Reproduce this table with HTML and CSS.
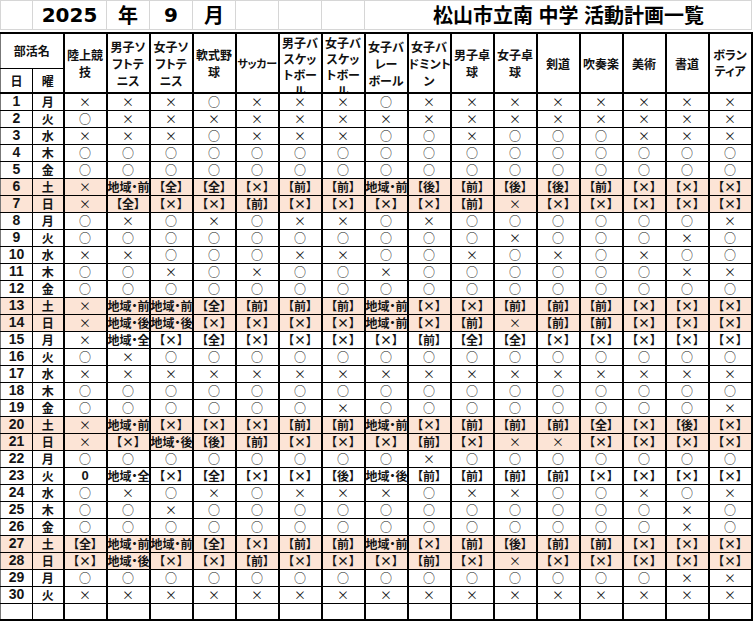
FILE: index.html
```html
<!DOCTYPE html>
<html lang="ja">
<head>
<meta charset="utf-8">
<title>松山市立南 中学 活動計画一覧</title>
<link rel="stylesheet" href="styles.css">
</head>
<body>
<div class="sheet">
<table class="grid title">
<colgroup><col class="col-day"><col class="col-wd"><col class="col-club" span="16"></colgroup>
<tr>
<td></td><td colspan="2" class="num">2025</td><td>年</td><td class="num">9</td><td>月</td><td></td><td></td><td></td><td colspan="9" class="name">松山市立南 中学 活動計画一覧</td>
</tr>
</table>
<table class="grid plan">
<colgroup><col class="col-day"><col class="col-wd"><col class="col-club" span="16"></colgroup>
<thead>
<tr class="h1">
<th colspan="2" class="bk">部活名</th>
<th rowspan="2" class="club"><div class="hd">陸上競<br>技</div></th>
<th rowspan="2" class="club"><div class="hd">男子ソ<br>フトテ<br>ニス</div></th>
<th rowspan="2" class="club"><div class="hd">女子ソ<br>フトテ<br>ニス</div></th>
<th rowspan="2" class="club"><div class="hd">軟式野<br>球</div></th>
<th rowspan="2" class="club"><div class="hd sm">サッカー</div></th>
<th rowspan="2" class="club"><div class="hd tall">男子バ<br>スケッ<br>トボー<br>ル</div></th>
<th rowspan="2" class="club"><div class="hd tall">女子バ<br>スケッ<br>トボー<br>ル</div></th>
<th rowspan="2" class="club"><div class="hd">女子バ<br>レー<br>ボール</div></th>
<th rowspan="2" class="club"><div class="hd">女子バ<br>ドミント<br>ン</div></th>
<th rowspan="2" class="club"><div class="hd">男子卓<br>球</div></th>
<th rowspan="2" class="club"><div class="hd">女子卓<br>球</div></th>
<th rowspan="2" class="club"><div class="hd">剣道</div></th>
<th rowspan="2" class="club"><div class="hd">吹奏楽</div></th>
<th rowspan="2" class="club"><div class="hd">美術</div></th>
<th rowspan="2" class="club"><div class="hd">書道</div></th>
<th rowspan="2" class="club"><div class="hd tight">ボラン<br>ティア</div></th>
</tr>
<tr class="h2"><th>日</th><th>曜</th></tr>
</thead>
<tbody>
<tr><td class="d">1</td><td class="w">月</td><td>×</td><td>×</td><td>×</td><td>○</td><td>×</td><td>×</td><td>×</td><td>○</td><td>×</td><td>×</td><td>×</td><td>×</td><td>×</td><td>×</td><td>×</td><td>×</td></tr>
<tr><td class="d">2</td><td class="w">火</td><td>○</td><td>×</td><td>×</td><td>×</td><td>×</td><td>×</td><td>×</td><td>×</td><td>×</td><td>×</td><td>×</td><td>×</td><td>×</td><td>×</td><td>×</td><td>×</td></tr>
<tr><td class="d">3</td><td class="w">水</td><td>×</td><td>×</td><td>×</td><td>○</td><td>×</td><td>×</td><td>×</td><td>○</td><td>○</td><td>×</td><td>○</td><td>○</td><td>○</td><td>×</td><td>×</td><td>×</td></tr>
<tr><td class="d">4</td><td class="w">木</td><td>○</td><td>○</td><td>○</td><td>○</td><td>○</td><td>○</td><td>○</td><td>○</td><td>○</td><td>○</td><td>○</td><td>○</td><td>○</td><td>○</td><td>○</td><td>○</td></tr>
<tr><td class="d">5</td><td class="w">金</td><td>○</td><td>○</td><td>○</td><td>○</td><td>○</td><td>○</td><td>○</td><td>○</td><td>○</td><td>○</td><td>○</td><td>○</td><td>○</td><td>○</td><td>○</td><td>○</td></tr>
<tr class="we"><td class="d">6</td><td class="w">土</td><td>×</td><td class="t">地域・前</td><td class="t">【全】</td><td class="t">【全】</td><td class="t">【×】</td><td class="t">【前】</td><td class="t">【前】</td><td class="t">地域・前</td><td class="t">【後】</td><td class="t">【前】</td><td class="t">【後】</td><td class="t">【後】</td><td class="t">【前】</td><td class="t">【×】</td><td class="t">【×】</td><td class="t">【×】</td></tr>
<tr class="we"><td class="d">7</td><td class="w">日</td><td>×</td><td class="t">【全】</td><td class="t">【×】</td><td class="t">【×】</td><td class="t">【前】</td><td class="t">【×】</td><td class="t">【×】</td><td class="t">【×】</td><td class="t">【×】</td><td class="t">【前】</td><td>×</td><td class="t">【×】</td><td class="t">【×】</td><td class="t">【×】</td><td class="t">【×】</td><td class="t">【×】</td></tr>
<tr><td class="d">8</td><td class="w">月</td><td>○</td><td>×</td><td>○</td><td>×</td><td>○</td><td>×</td><td>×</td><td>○</td><td>×</td><td>○</td><td>○</td><td>○</td><td>○</td><td>○</td><td>○</td><td>×</td></tr>
<tr><td class="d">9</td><td class="w">火</td><td>○</td><td>○</td><td>○</td><td>○</td><td>○</td><td>○</td><td>○</td><td>○</td><td>○</td><td>○</td><td>×</td><td>○</td><td>○</td><td>○</td><td>×</td><td>○</td></tr>
<tr><td class="d">10</td><td class="w">水</td><td>×</td><td>×</td><td>○</td><td>○</td><td>○</td><td>×</td><td>×</td><td>○</td><td>○</td><td>×</td><td>○</td><td>×</td><td>○</td><td>×</td><td>○</td><td>○</td></tr>
<tr><td class="d">11</td><td class="w">木</td><td>○</td><td>○</td><td>×</td><td>○</td><td>×</td><td>○</td><td>○</td><td>×</td><td>○</td><td>○</td><td>○</td><td>○</td><td>○</td><td>○</td><td>×</td><td>×</td></tr>
<tr><td class="d">12</td><td class="w">金</td><td>○</td><td>○</td><td>○</td><td>○</td><td>○</td><td>○</td><td>○</td><td>○</td><td>○</td><td>○</td><td>○</td><td>○</td><td>○</td><td>○</td><td>○</td><td>○</td></tr>
<tr class="we"><td class="d">13</td><td class="w">土</td><td>×</td><td class="t">地域・前</td><td class="t">地域・前</td><td class="t">【全】</td><td class="t">【前】</td><td class="t">【前】</td><td class="t">【前】</td><td class="t">地域・前</td><td class="t">【×】</td><td class="t">【×】</td><td class="t">【前】</td><td class="t">【前】</td><td class="t">【前】</td><td class="t">【×】</td><td class="t">【×】</td><td class="t">【×】</td></tr>
<tr class="we"><td class="d">14</td><td class="w">日</td><td>×</td><td class="t">地域・後</td><td class="t">地域・後</td><td class="t">【×】</td><td class="t">【×】</td><td class="t">【×】</td><td class="t">【×】</td><td class="t">地域・前</td><td class="t">【×】</td><td class="t">【前】</td><td>×</td><td class="t">【前】</td><td class="t">【前】</td><td class="t">【×】</td><td class="t">【×】</td><td class="t">【×】</td></tr>
<tr><td class="d">15</td><td class="w">月</td><td>×</td><td class="t">地域・全</td><td class="t">【×】</td><td class="t">【全】</td><td class="t">【×】</td><td class="t">【×】</td><td class="t">【×】</td><td class="t">【×】</td><td class="t">【前】</td><td class="t">【全】</td><td class="t">【全】</td><td class="t">【×】</td><td class="t">【×】</td><td class="t">【×】</td><td class="t">【×】</td><td class="t">【×】</td></tr>
<tr><td class="d">16</td><td class="w">火</td><td>○</td><td>×</td><td>○</td><td>○</td><td>○</td><td>○</td><td>○</td><td>○</td><td>○</td><td>○</td><td>○</td><td>○</td><td>○</td><td>○</td><td>○</td><td>○</td></tr>
<tr><td class="d">17</td><td class="w">水</td><td>×</td><td>×</td><td>×</td><td>×</td><td>×</td><td>×</td><td>×</td><td>×</td><td>×</td><td>×</td><td>×</td><td>×</td><td>×</td><td>×</td><td>×</td><td>×</td></tr>
<tr><td class="d">18</td><td class="w">木</td><td>○</td><td>○</td><td>○</td><td>○</td><td>○</td><td>○</td><td>○</td><td>○</td><td>○</td><td>○</td><td>○</td><td>○</td><td>○</td><td>○</td><td>○</td><td>○</td></tr>
<tr><td class="d">19</td><td class="w">金</td><td>○</td><td>○</td><td>○</td><td>○</td><td>○</td><td>○</td><td>×</td><td>○</td><td>○</td><td>○</td><td>○</td><td>○</td><td>○</td><td>○</td><td>○</td><td>×</td></tr>
<tr class="we"><td class="d">20</td><td class="w">土</td><td>×</td><td class="t">地域・前</td><td class="t">【×】</td><td class="t">【×】</td><td class="t">【×】</td><td class="t">【前】</td><td class="t">【前】</td><td class="t">地域・前</td><td class="t">【×】</td><td class="t">【前】</td><td class="t">【前】</td><td class="t">【前】</td><td class="t">【全】</td><td class="t">【×】</td><td class="t">【後】</td><td class="t">【×】</td></tr>
<tr class="we"><td class="d">21</td><td class="w">日</td><td>×</td><td class="t">【×】</td><td class="t">地域・後</td><td class="t">【後】</td><td class="t">【前】</td><td class="t">【×】</td><td class="t">【×】</td><td class="t">【×】</td><td class="t">【前】</td><td class="t">【×】</td><td>×</td><td>×</td><td class="t">【×】</td><td class="t">【×】</td><td class="t">【×】</td><td class="t">【×】</td></tr>
<tr><td class="d">22</td><td class="w">月</td><td>○</td><td>○</td><td>○</td><td>○</td><td>○</td><td>○</td><td>○</td><td>○</td><td>×</td><td>○</td><td>○</td><td>○</td><td>○</td><td>○</td><td>○</td><td>○</td></tr>
<tr><td class="d">23</td><td class="w">火</td><td class="t zero">0</td><td class="t">地域・全</td><td class="t">【×】</td><td class="t">【全】</td><td class="t">【×】</td><td class="t">【×】</td><td class="t">【後】</td><td class="t">地域・後</td><td class="t">【前】</td><td class="t">【前】</td><td class="t">【前】</td><td class="t">【前】</td><td class="t">【×】</td><td class="t">【×】</td><td class="t">【×】</td><td class="t">【×】</td></tr>
<tr><td class="d">24</td><td class="w">水</td><td>○</td><td>×</td><td>○</td><td>×</td><td>○</td><td>×</td><td>×</td><td>×</td><td>○</td><td>×</td><td>×</td><td>○</td><td>○</td><td>×</td><td>○</td><td>×</td></tr>
<tr><td class="d">25</td><td class="w">木</td><td>○</td><td>○</td><td>×</td><td>○</td><td>○</td><td>○</td><td>○</td><td>○</td><td>○</td><td>○</td><td>○</td><td>○</td><td>○</td><td>○</td><td>×</td><td>○</td></tr>
<tr><td class="d">26</td><td class="w">金</td><td>○</td><td>○</td><td>○</td><td>○</td><td>○</td><td>○</td><td>○</td><td>○</td><td>○</td><td>○</td><td>○</td><td>○</td><td>○</td><td>○</td><td>×</td><td>○</td></tr>
<tr class="we"><td class="d">27</td><td class="w">土</td><td class="t">【全】</td><td class="t">地域・前</td><td class="t">地域・前</td><td class="t">【全】</td><td class="t">【×】</td><td class="t">【前】</td><td class="t">【前】</td><td class="t">地域・前</td><td class="t">【×】</td><td class="t">【前】</td><td class="t">【後】</td><td class="t">【前】</td><td class="t">【前】</td><td class="t">【×】</td><td class="t">【×】</td><td class="t">【×】</td></tr>
<tr class="we"><td class="d">28</td><td class="w">日</td><td class="t">【×】</td><td class="t">地域・後</td><td class="t">【×】</td><td class="t">【×】</td><td class="t">【前】</td><td class="t">【×】</td><td class="t">【×】</td><td class="t">【×】</td><td class="t">【前】</td><td class="t">【×】</td><td>×</td><td class="t">【×】</td><td class="t">【×】</td><td class="t">【×】</td><td class="t">【×】</td><td class="t">【×】</td></tr>
<tr><td class="d">29</td><td class="w">月</td><td>○</td><td>○</td><td>○</td><td>○</td><td>○</td><td>○</td><td>○</td><td>○</td><td>○</td><td>○</td><td>○</td><td>○</td><td>○</td><td>○</td><td>×</td><td>×</td></tr>
<tr><td class="d">30</td><td class="w">火</td><td>×</td><td>×</td><td>×</td><td>×</td><td>×</td><td>×</td><td>×</td><td>×</td><td>×</td><td>×</td><td>×</td><td>×</td><td>×</td><td>×</td><td>×</td><td>×</td></tr>
<tr><td></td><td></td><td></td><td></td><td></td><td></td><td></td><td></td><td></td><td></td><td></td><td></td><td></td><td></td><td></td><td></td><td></td><td></td></tr>
</tbody>
</table>
</div>
</body>
</html>
```

FILE: styles.css
```css
* { box-sizing: border-box; }
html, body { margin: 0; padding: 0; background: #fff; }
body {
  color: #151515;
  font-family: "Noto Sans CJK JP", "Noto Sans", sans-serif;
}
.sheet { width: 753px; height: 622px; overflow: hidden; }
.grid { border-collapse: collapse; table-layout: fixed; width: 751px; }
.col-day { width: 32px; }
.col-wd { width: 31px; }
.col-club { width: 43px; }

.title td {
  height: 29px;
  padding: 0;
  border: 1px solid #d6d6d6;
  text-align: center;
  font-size: 20px;
  font-weight: 700;
  line-height: 26px;
  white-space: nowrap;
  color: #000;
}
.title .num { font-family: "DejaVu Sans", sans-serif; }
.title .name { text-align: left; padding-left: 68px; word-spacing: 1px; }

.plan { margin-top: 2px; border: 2px solid #000; border-left: 1px solid #777; }
.plan th, .plan td {
  padding: 0;
  border: 1px solid #000;
  text-align: center;
  overflow: hidden;
  white-space: nowrap;
}
.plan th { font-size: 12px; font-weight: 700; color: #111; font-feature-settings: "palt"; }
.plan .h1 .bk { height: 35px; vertical-align: middle; border-left: 1px solid #777; }
.plan .h2 th { height: 25px; border-bottom: 2px solid #000; }
.plan .h2 th:first-child { border-left: 1px solid #777; }
.plan .club {
  border-left: 2px solid #000;
  border-right: 2px solid #000;
  border-bottom: 2px solid #000;
}
.hd {
  height: 57px;
  display: flex;
  flex-direction: column;
  justify-content: center;
  line-height: 17px;
  white-space: nowrap;
  overflow: hidden;
}
.hd.tall { justify-content: flex-start; line-height: 16px; }
.hd.tight { line-height: 16px; }
.hd.sm { font-size: 11px; letter-spacing: -0.3px; }

.plan td {
  height: 17px;
  font-size: 12px;
  line-height: 15px;
  font-feature-settings: "palt";
}
.plan td:first-child { border-left: 1px solid #777; }
.plan td:nth-child(n+3) { border-left: 2px solid #000; border-right: 2px solid #000; }
.plan .d { font-family: "Liberation Sans", sans-serif; font-weight: 700; font-size: 14px; }
.plan .w { font-weight: 700; }
.plan .t { font-weight: 700; }
.plan .zero { font-family: "Liberation Sans", sans-serif; font-size: 13px; }
.plan .we td { background: #fce4d6; }
```
